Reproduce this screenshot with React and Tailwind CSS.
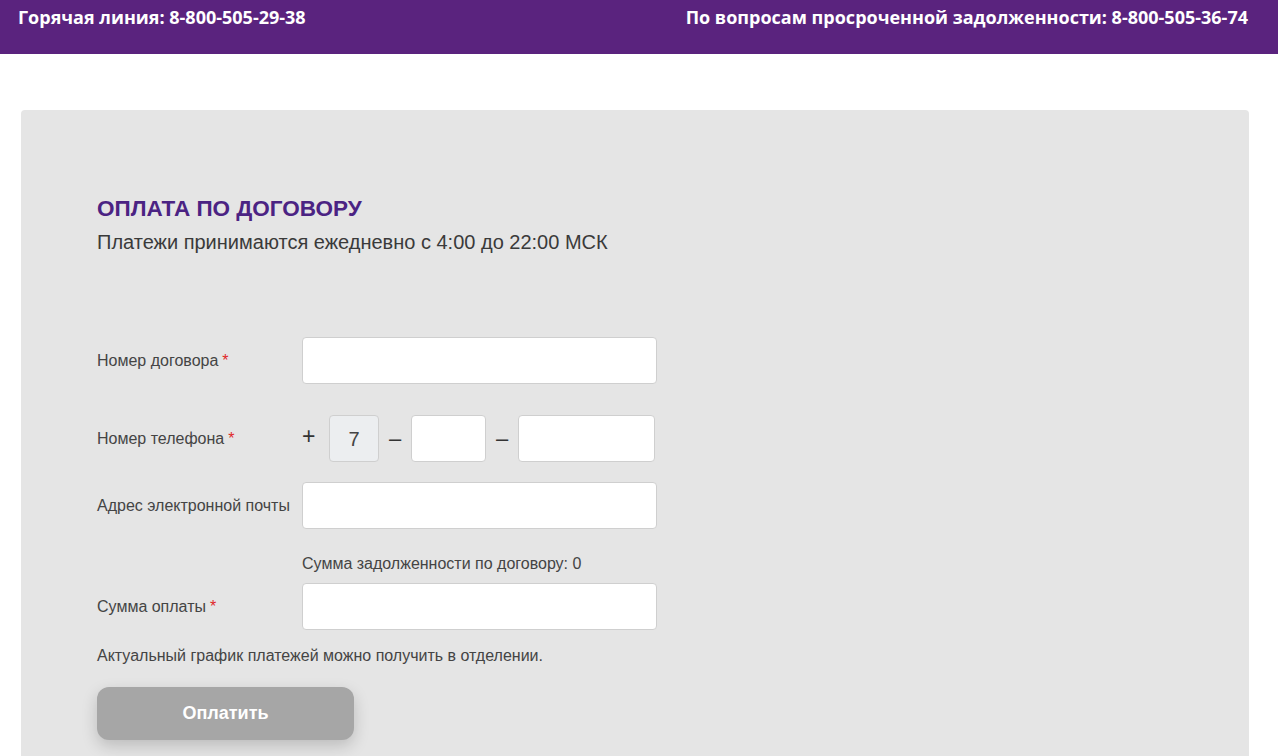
import React, { useState } from 'react';

const Label = ({ children, required }) => (
  <div className="w-[205px] shrink-0 text-[16px] text-[#444]">
    {children}
    {required && <span className="text-[#e02828] ml-1">*</span>}
  </div>
);

const inputCls =
  'h-[47px] rounded-[4px] border border-[#cfcfcf] bg-white px-3 text-[16px] text-[#333] outline-none';

const App = () => {
  const [contract, setContract] = useState('');
  const [code, setCode] = useState('');
  const [phone, setPhone] = useState('');
  const [email, setEmail] = useState('');
  const [amount, setAmount] = useState('');

  return (
    <div className="min-h-screen bg-white font-['Liberation_Sans',Arial,sans-serif]">
      {/* Header */}
      <div className="h-[54px] bg-[#5a237e] pl-[18px] pr-[30px] pt-[3px] flex justify-between font-['Open_Sans',sans-serif] font-bold text-[18px] leading-[28px] text-white">
        <span>Горячая линия: 8-800-505-29-38</span>
        <span>По вопросам просроченной задолженности: 8-800-505-36-74</span>
      </div>

      {/* Card */}
      <div className="ml-[21px] mr-[29px] mt-[56px] rounded-t-[4px] bg-[#e5e5e5] pl-[76px] pt-[86px] pb-[40px]">
        <h1 className="text-[22.5px] leading-[26px] font-bold text-[#4b2383]">ОПЛАТА ПО ДОГОВОРУ</h1>
        <p className="mt-[7px] text-[20px] leading-[26px] text-[#3a3a3a]">
          Платежи принимаются ежедневно с 4:00 до 22:00 МСК
        </p>

        <div className="mt-[82px] flex flex-col">
          <div className="flex items-center">
            <Label required>Номер договора</Label>
            <input
              value={contract}
              onChange={(e) => setContract(e.target.value)}
              className={`${inputCls} w-[355px]`}
            />
          </div>

          <div className="mt-[31px] flex items-center">
            <Label required>Номер телефона</Label>
            <span className="w-[27px] text-[23px] leading-[23px] text-[#333] -mt-[4px]">+</span>
            <div className="h-[47px] w-[50px] rounded-[4px] border border-[#cfcfcf] bg-[#eceef0] flex items-center justify-center text-[20px] text-[#444]">
              7
            </div>
            <span className="w-[32px] text-center text-[22px] text-[#333]">–</span>
            <input
              value={code}
              onChange={(e) => setCode(e.target.value)}
              className={`${inputCls} w-[75px]`}
            />
            <span className="w-[32px] text-center text-[22px] text-[#333]">–</span>
            <input
              value={phone}
              onChange={(e) => setPhone(e.target.value)}
              className={`${inputCls} w-[137px]`}
            />
          </div>

          <div className="mt-[20px] flex items-center">
            <Label>Адрес электронной почты</Label>
            <input
              value={email}
              onChange={(e) => setEmail(e.target.value)}
              className={`${inputCls} w-[355px]`}
            />
          </div>

          <div className="mt-[26px] ml-[205px] text-[16px] leading-[18px] text-[#444]">
            Сумма задолженности по договору: 0
          </div>

          <div className="mt-[10px] flex items-center">
            <Label required>Сумма оплаты</Label>
            <input
              value={amount}
              onChange={(e) => setAmount(e.target.value)}
              className={`${inputCls} w-[355px]`}
            />
          </div>

          <p className="mt-[17px] text-[16px] leading-[18px] text-[#444]">
            Актуальный график платежей можно получить в отделении.
          </p>

          <button className="mt-[22px] h-[53px] w-[257px] rounded-[12px] bg-[#a6a6a6] text-[18px] font-bold text-white shadow-[0_6px_16px_rgba(0,0,0,0.18)]">
            Оплатить
          </button>
        </div>
      </div>
    </div>
  );
};

export default App;
